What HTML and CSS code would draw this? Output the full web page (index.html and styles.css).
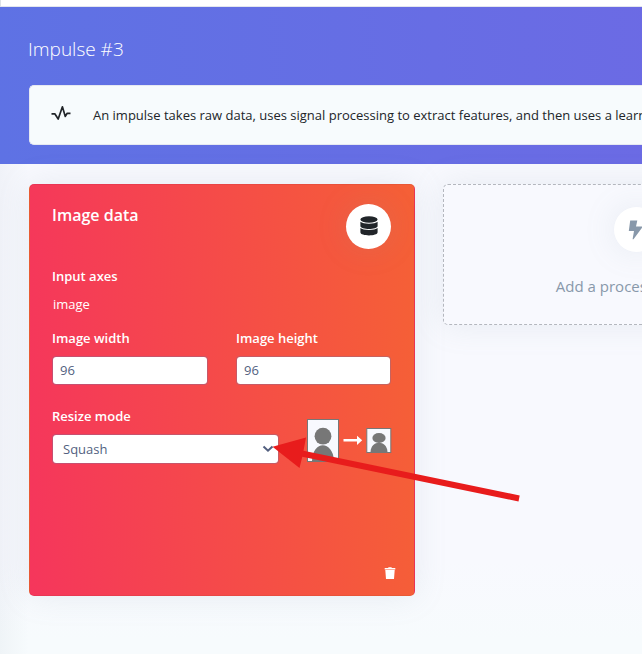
FILE: index.html
```html
<!DOCTYPE html>
<html lang="en">
<head>
<meta charset="utf-8">
<title>Impulse design</title>
<link rel="stylesheet" href="styles.css">
</head>
<body>
<div class="topbar"></div>
<header class="header">
  <h1 class="title">Impulse #3</h1>
  <div class="notice">
    <svg class="pulse" width="20" height="16" viewBox="0 0 20 16"><path d="M0.5 8.8H3.8L7.2 14L11.4 1.8L14.3 11.4L16.2 8.3H19.5" fill="none" stroke="#212529" stroke-width="1.7" stroke-linejoin="round"/></svg>
    <p class="notice-text">An impulse takes raw data, uses signal processing to extract features, and then uses a learning block to classify new data.</p>
  </div>
</header>
<main class="blocks">
  <section class="card">
    <div class="card-head">
      <h2 class="card-title">Image data</h2>
      <div class="circle">
        <svg class="database" width="18" height="20" viewBox="0 0 18 20" fill="#212529"><ellipse cx="9" cy="3.5" rx="8.6" ry="3.2"/><path d="M.4 5.8C3 8.4 15 8.4 17.6 5.8V10C17.6 14 .4 14 .4 10ZM.4 12.1C3 14.7 15 14.7 17.6 12.1V16.3C17.6 20.5 .4 20.5 .4 16.3Z"/></svg>
      </div>
    </div>
    <div class="label">Input axes</div>
    <div class="axis">image</div>
    <div class="fields">
      <div class="field"><div class="label">Image width</div><div class="input">96</div></div>
      <div class="field"><div class="label">Image height</div><div class="input">96</div></div>
    </div>
    <div class="resize">
      <div class="mode">
        <div class="label">Resize mode</div>
        <div class="input select"><span>Squash</span><svg width="12" height="8" viewBox="0 0 12 8"><path d="M1.5 1.5L6 5.7L10.5 1.5" fill="none" stroke="#525f7f" stroke-width="2"/></svg></div>
      </div>
      <svg class="preview" width="86" height="44" viewBox="0 0 86 44">
        <rect x=".5" y=".5" width="31" height="42" fill="#f8f9fe" stroke="#777"/>
        <circle cx="16" cy="17.2" r="8.4" fill="#777"/>
        <path d="M5 42C5.5 21 26 21 27 42Z" fill="#777"/>
        <path d="M36.5 20H50V16.7L55.2 21.2L50 25.9V22.5H36.5Z" fill="#fff"/>
        <rect x="59.8" y="9.5" width="24" height="24" fill="#f8f9fe" stroke="#777"/>
        <ellipse cx="72" cy="19" rx="6.6" ry="4.9" fill="#777"/>
        <path d="M63.5 33C64 20.8 80 20.8 80.5 33Z" fill="#777"/>
      </svg>
    </div>
    <svg class="trash" width="12" height="13" viewBox="0 0 12 13" fill="#fff"><path d="M.7 1H4L4.7.3H7.3L8 1H11.3V2.4H.7ZM1.3 3.1H10.7L10 12H2Z"/></svg>
  </section>
  <section class="add">
    <div class="circle bolt">
      <svg width="16" height="20" viewBox="0 0 16 20"><path d="M2.2.4H9.3L8 6.4H15L5.5 19.3H4.6L6 11H.8Z" fill="#8898aa"/></svg>
    </div>
    <div class="add-text">Add a processing block</div>
  </section>
</main>
<svg class="pointer" width="250" height="68" viewBox="0 0 250 68"><path d="M2.5 9.7L36 .5 33.5 13.8 249.7 58.4 248.5 64.5 32.3 19.7 29.5 31Z" fill="#e81c1c"/></svg>
</body>
</html>
```
FILE: styles.css
```css
* { box-sizing: border-box; }
html { overflow: hidden; }
body {
  margin: 0;
  width: 642px;
  height: 654px;
  overflow: hidden;
  position: relative;
  background: linear-gradient(90deg, rgba(136,152,170,.07), rgba(136,152,170,0) 29px), linear-gradient(#f8f9fe 560px, #f7fbfd 640px);
  color: #212529;
  font: 13px/20px "Open Sans", sans-serif;
}
.topbar { height: 7px; background: #fff; border-left: 1px solid #dee2e6; border-bottom: 1px solid #e3e6ee; }
.header {
  height: 157px;
  padding: 29px 0 0 29px;
  background: linear-gradient(87deg, #5e72e4, #825ee4) 0 0 / 1750px 100%;
}
.title { margin: 0 0 0 -1px; color: #fff; font-size: 19px; line-height: 26px; font-weight: 300; }
.notice {
  display: flex;
  align-items: center;
  height: 60px;
  margin-top: 23px;
  padding-left: 21px;
  overflow: hidden;
  background: #f7fbfd;
  border: 1px solid #e6e9f1;
  border-right: 0;
  border-radius: 5px 0 0 5px;
}
.pulse { flex: none; margin: -4px 22px 0 0; }
.notice-text { margin: 0; white-space: nowrap; }
.blocks { display: flex; align-items: flex-start; gap: 28px; padding: 20px 0 0 29px; }
.card {
  display: flex;
  flex: none;
  flex-direction: column;
  width: 386px;
  height: 412px;
  padding: 18px 23px 15px 22px;
  border: 1px solid rgba(0,0,0,.05);
  border-radius: 5px;
  background: linear-gradient(87deg, #f5365c, #f56036);
  box-shadow: 0 0 32px rgba(136,152,170,.15);
  color: #fff;
}
.card-head { display: flex; justify-content: space-between; height: 63px; }
.card-title { margin: 0; font-size: 16px; line-height: 24px; font-weight: 600; }
.circle {
  display: flex;
  align-items: center;
  justify-content: center;
  width: 45px;
  height: 45px;
  border-radius: 50%;
  background: #fff;
  box-shadow: 0 0 32px rgba(136,152,170,.15);
}
.card .circle { margin-top: 1px; }
.database { margin-top: -2px; }
.label { font-size: 13px; line-height: 20px; font-weight: 650; }
.axis { margin: 8px 0 14px 1px; line-height: 20px; }
.fields { display: grid; grid-template-columns: 156px 155px; gap: 28px; }
.input {
  height: 29px;
  margin-top: 8px;
  padding: 0 7px;
  border: 1px solid rgba(130,110,150,.4);
  border-radius: 4px;
  background: #fff;
  background-clip: padding-box;
  color: #525f7f;
  line-height: 27px;
}
.resize { display: flex; justify-content: space-between; margin-top: 21px; }
.mode { width: 227px; }
.select { display: flex; justify-content: space-between; align-items: center; height: 30px; padding: 0 4px 0 10px; }
.preview { margin: 13px -2px 0 0; }
.trash { margin: auto -5px 0 auto; }
.add {
  display: flex;
  flex: none;
  flex-direction: column;
  align-items: center;
  width: 386px;
  height: 141px;
  padding-top: 22px;
  border: 1px dashed #b4b7be;
  border-radius: 5px;
  background: #f8f9fe;
  box-shadow: 0 0 32px rgba(136,152,170,.15);
}
.add-text { margin-top: 22px; color: #8898aa; font-size: 15px; line-height: 24px; }
.pointer { position: absolute; left: 270px; top: 437px; overflow: visible; }
```
